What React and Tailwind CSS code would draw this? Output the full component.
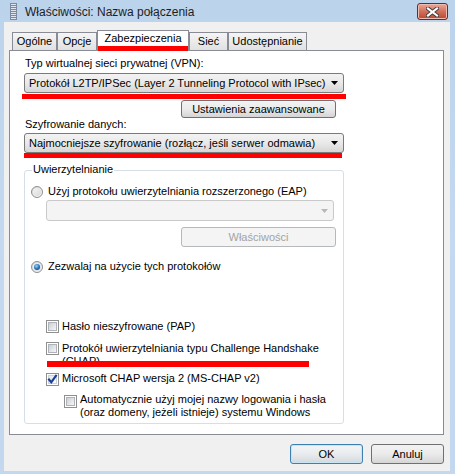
import React from "react";

function Arrow({ disabled }) {
  return (
    <svg width="7" height="4" viewBox="0 0 7 4" className="shrink-0">
      <path d="M0 0h7L3.5 4z" fill={disabled ? "#b8b8b8" : "#000"} />
    </svg>
  );
}

function Combo({ text, disabled, className = "" }) {
  return (
    <div
      className={
        "flex items-center justify-between rounded-[3px] border pl-[4px] pr-[5px] " +
        (disabled
          ? "border-[#c9c9c9] bg-[#f4f4f4] text-[#a0a0a0] "
          : "border-[#7a7a7a] bg-gradient-to-b from-[#f3f3f3] via-[#e9e9e9] to-[#d6d6d6] ") +
        className
      }
    >
      <span className="whitespace-nowrap">{text}</span>
      <Arrow disabled={disabled} />
    </div>
  );
}

function Button({ children, disabled, primary, className = "" }) {
  return (
    <div
      className={
        "flex items-center justify-center rounded-[3px] border whitespace-nowrap " +
        (disabled
          ? "border-[#b5b9bc] bg-[#f4f4f4] text-[#a3a3a3] "
          : primary
          ? "border-[#3c7fb1] bg-gradient-to-b from-[#f2f4f5] via-[#e9ecee] to-[#d4d8db] shadow-[inset_0_0_0_1px_#c6e6f8] "
          : "border-[#707070] bg-gradient-to-b from-[#f2f2f2] via-[#ebebeb] to-[#d5d5d5] ") +
        className
      }
    >
      {children}
    </div>
  );
}

function Checkbox({ checked }) {
  return (
    <span className="relative flex h-[13px] w-[13px] shrink-0 border border-[#8f8f8f] bg-white p-[1px]">
      <span
        className={
          "flex-1 border " +
          (checked
            ? "border-[#c9d2da] bg-gradient-to-br from-[#e4e8ec] to-[#fbfbfb]"
            : "border-[#aeb3b9] bg-gradient-to-br from-[#cbcfd5] to-[#f6f6f6]")
        }
      />
      {checked && (
        <svg
          width="11"
          height="11"
          viewBox="0 0 11 11"
          className="absolute left-[0px] top-[0px]"
        >
          <path
            d="M2 5.5L4.3 8.2L9 1.8"
            fill="none"
            stroke="#1c3f94"
            strokeWidth="2.1"
            strokeLinecap="square"
          />
        </svg>
      )}
    </span>
  );
}

function Radio({ checked }) {
  return (
    <span className="flex h-[12px] w-[12px] shrink-0 items-center justify-center rounded-full border border-[#8e8f8f] bg-gradient-to-br from-[#d4d4d4] to-[#fbfbfb]">
      <span className="flex h-[8px] w-[8px] items-center justify-center rounded-full bg-gradient-to-br from-[#f4f4f4] to-[#dadada]">
        {checked && (
          <span className="h-[6px] w-[6px] rounded-full bg-[radial-gradient(circle_at_40%_35%,#9ad8f7,#1e6bb8_55%,#0c3d78)]" />
        )}
      </span>
    </span>
  );
}

function Tab({ children, width }) {
  return (
    <div
      className={
        "flex h-[18px] items-center justify-center border border-b-0 border-[#898c95] bg-gradient-to-b from-[#f5f5f5] to-[#e1e1e1] " +
        width
      }
    >
      {children}
    </div>
  );
}

export default function App() {
  return (
    <div className="flex h-[474px] w-[455px] flex-col overflow-hidden bg-gradient-to-b from-[#bcd3ec] via-[#c4d9ef] to-[#c3d8ee] font-['Liberation_Sans',Arial,sans-serif] text-[11px] leading-[13px] text-black">
      {/* Title bar */}
      <div className="flex h-[22px] shrink-0 items-start">
        <svg width="7" height="17" viewBox="0 0 7 17" className="ml-[10px] mt-[3px]">
          <rect x="0" y="0" width="7" height="17" fill="#7b8aa0" />
          {[1, 3, 5, 7, 9, 11, 13, 15].map((y) => (
            <rect key={y} x="1" y={y} width="5" height="1" fill="#dfe6ef" />
          ))}
        </svg>
        <span className="ml-[8px] mt-[5px] text-[12px] leading-[15px] text-[#1e1e1e]">
          Właściwości: Nazwa połączenia
        </span>
        <div className="ml-auto mr-[7px] mt-[3px] flex h-[17px] w-[31px] items-center justify-center rounded-[3px] border border-[#6b2b24] bg-gradient-to-b from-[#e9a99b] via-[#d0705c] to-[#c0432a] shadow-[inset_0_0_0_1px_#eebcb1]">
          <svg width="13" height="10" viewBox="0 0 13 10">
            <path
              d="M2 1.5L11 8.5M11 1.5L2 8.5"
              stroke="#3b3b3b"
              strokeWidth="4"
              strokeLinecap="square"
            />
            <path
              d="M2 1.5L11 8.5M11 1.5L2 8.5"
              stroke="#ffffff"
              strokeWidth="2.2"
              strokeLinecap="square"
            />
          </svg>
        </div>
      </div>

      {/* Client area */}
      <div className="mb-[3px] ml-[4px] mr-[5px] flex flex-1 flex-col bg-[#f0f0f0] pl-[5px] pr-[6px] pt-[8px]">
        {/* Tabs */}
        <div className="relative z-10 ml-[3px] flex h-[20px] items-end">
          <Tab width="w-[45px]">Ogólne</Tab>
          <Tab width="w-[40px]">Opcje</Tab>
          <div className="relative -mb-[1px] flex h-[21px] w-[92px] justify-center border border-b-0 border-[#898c95] bg-white pt-[1px]">
            Zabezpieczenia
            <div className="absolute bottom-0 left-[0px] right-[0px] h-[5px] bg-[#ff0000]" />
          </div>
          <Tab width="w-[39px]">Sieć</Tab>
          <Tab width="w-[79px]">Udostępnianie</Tab>
        </div>

        {/* Panel */}
        <div className="flex h-[385px] w-[435px] flex-col border border-[#898c95] bg-white pl-[14px]">
          <div className="ml-[1px] mt-[6px]">Typ wirtualnej sieci prywatnej (VPN):</div>
          <div className="relative mt-[3px] w-[320px]">
            <Combo
              className="h-[20px]"
              text="Protokół L2TP/IPSec (Layer 2 Tunneling Protocol with IPsec)"
            />
            <div className="absolute -left-[2px] -right-[2px] top-[21px] h-[5px] bg-[#ff0000]" />
          </div>
          <Button className="ml-[157px] mt-[7px] h-[18px] w-[155px]">
            Ustawienia zaawansowane
          </Button>
          <div className="ml-[1px]">Szyfrowanie danych:</div>
          <div className="relative mt-[2px] w-[320px]">
            <Combo
              className="h-[20px]"
              text="Najmocniejsze szyfrowanie (rozłącz, jeśli serwer odmawia)"
            />
            <div className="absolute left-0 right-[2px] top-[20px] h-[5px] bg-[#ff0000]" />
          </div>

          {/* Group box */}
          <div className="relative mt-[17px] flex h-[254px] w-[320px] flex-col rounded-[3px] border border-[#d5dfe5]">
            <span className="absolute -top-[8px] left-[7px] bg-white px-[1px]">
              Uwierzytelnianie
            </span>
            <div className="ml-[6px] mt-[14px] flex items-center gap-[5px]">
              <Radio />
              <span>Użyj protokołu uwierzytelniania rozszerzonego (EAP)</span>
            </div>
            <Combo disabled className="ml-[21px] mt-[2px] h-[21px] w-[288px]" text="" />
            <Button disabled className="ml-[156px] mt-[6px] h-[20px] w-[155px]">
              Właściwości
            </Button>
            <div className="ml-[6px] mt-[13px] flex items-center gap-[5px]">
              <Radio checked />
              <span>Zezwalaj na użycie tych protokołów</span>
            </div>

            <div className="ml-[21px] mt-[47px] flex items-start gap-[3px]">
              <Checkbox />
              <span>Hasło nieszyfrowane (PAP)</span>
            </div>
            <div className="relative ml-[21px] mt-[9px] flex items-start gap-[3px]">
              <Checkbox />
              <span>
                Protokół uwierzytelniania typu Challenge Handshake
                <br />
                (CHAP)
              </span>
              <div className="absolute left-[1px] top-[19px] h-[6px] w-[262px] bg-[#ff0000]" />
            </div>
            <div className="ml-[21px] mt-[5px] flex items-start gap-[3px]">
              <Checkbox checked />
              <span className="-mt-[1px]">Microsoft CHAP wersja 2 (MS-CHAP v2)</span>
            </div>
            <div className="ml-[39px] mt-[7px] flex items-start gap-[3px]">
              <span className="mt-[2px]">
                <Checkbox />
              </span>
              <span>
                Automatycznie użyj mojej nazwy logowania i hasła
                <br />
                (oraz domeny, jeżeli istnieje) systemu Windows
              </span>
            </div>
          </div>
        </div>

        {/* Dialog buttons */}
        <div className="mt-[9px] flex justify-end gap-[8px]">
          <Button primary className="h-[20px] w-[73px]">
            OK
          </Button>
          <Button className="h-[20px] w-[73px]">Anuluj</Button>
        </div>
      </div>
    </div>
  );
}
